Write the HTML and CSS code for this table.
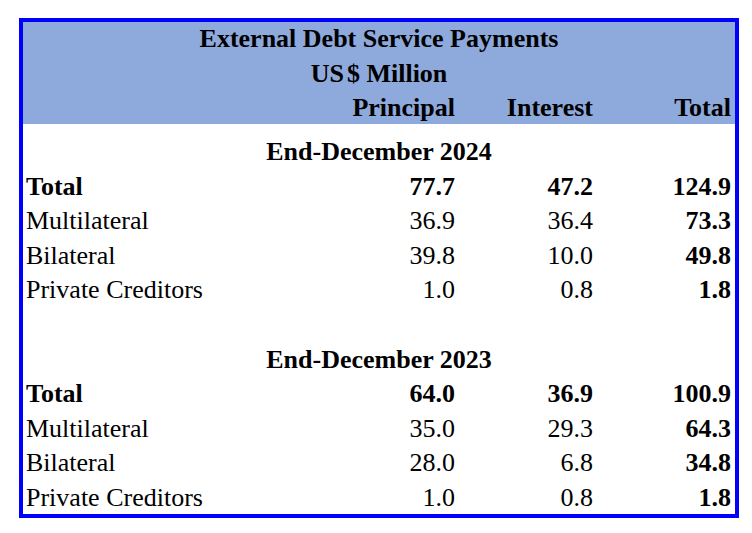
FILE: index.html
```html
<!DOCTYPE html>
<html>
<head>
<meta charset="utf-8">
<link rel="stylesheet" href="styles.css">
</head>
<body>
<div class="sheet">
  <div class="head">
    <div class="hrow span">External Debt Service Payments</div>
    <div class="hrow span">US<span class="gap">$</span> Million</div>
    <div class="hrow cols">
      <div></div>
      <div class="num">Principal</div>
      <div class="num">Interest</div>
      <div class="num">Total</div>
    </div>
  </div>
  <div class="body">
    <div class="row span b">End-December 2024</div>
    <div class="row cols b"><div class="lbl">Total</div><div class="num">77.7</div><div class="num">47.2</div><div class="num">124.9</div></div>
    <div class="row cols"><div class="lbl">Multilateral</div><div class="num">36.9</div><div class="num">36.4</div><div class="num b">73.3</div></div>
    <div class="row cols"><div class="lbl">Bilateral</div><div class="num">39.8</div><div class="num">10.0</div><div class="num b">49.8</div></div>
    <div class="row cols"><div class="lbl">Private Creditors</div><div class="num">1.0</div><div class="num">0.8</div><div class="num b">1.8</div></div>
    <div class="row"></div>
    <div class="row span b">End-December 2023</div>
    <div class="row cols b"><div class="lbl">Total</div><div class="num">64.0</div><div class="num">36.9</div><div class="num">100.9</div></div>
    <div class="row cols"><div class="lbl">Multilateral</div><div class="num">35.0</div><div class="num">29.3</div><div class="num b">64.3</div></div>
    <div class="row cols"><div class="lbl">Bilateral</div><div class="num">28.0</div><div class="num">6.8</div><div class="num b">34.8</div></div>
    <div class="row cols last"><div class="lbl">Private Creditors</div><div class="num">1.0</div><div class="num">0.8</div><div class="num b">1.8</div></div>
  </div>
</div>
</body>
</html>
```
FILE: styles.css
```css
html, body {
  margin: 0;
  padding: 0;
  background: #ffffff;
}
body {
  padding: 18px 0 0 19px;
}
.sheet {
  width: 712px;
  border: 4px solid #0000ff;
  font-family: "Liberation Serif", "Times New Roman", serif;
  font-size: 26px;
  color: #000000;
}
.head {
  background: #8ea9db;
  font-weight: bold;
}
.hrow {
  height: 34px;
  line-height: 34px;
}
.hrow:nth-child(2) {
  line-height: 35px;
}
.hrow:nth-child(3) {
  line-height: 36px;
}
.gap {
  margin-left: 3px;
}
.body {
  padding-top: 11px;
}
.row {
  height: 34.6px;
  line-height: 34.6px;
}
.row.last {
  height: 32.6px;
}
.span {
  text-align: center;
}
.cols {
  display: grid;
  grid-template-columns: 294px 138px 138px 138px;
  padding-right: 4px;
}
.lbl {
  padding-left: 3px;
  white-space: nowrap;
}
.num {
  text-align: right;
  white-space: nowrap;
}
.b {
  font-weight: bold;
}
```
